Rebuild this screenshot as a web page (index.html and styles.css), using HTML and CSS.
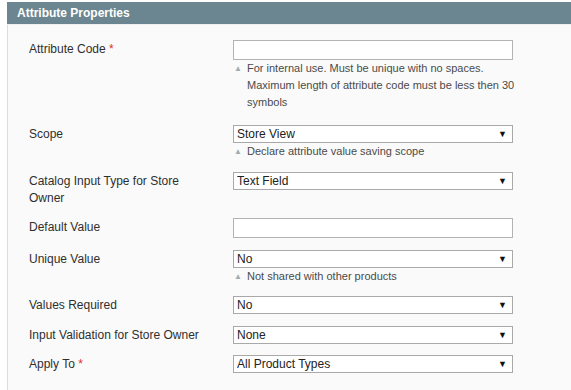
FILE: index.html
```html
<!DOCTYPE html>
<html lang="en">
<head>
    <meta charset="UTF-8">
    <title>Attribute Properties</title>
    <link rel="stylesheet" href="styles.css">
</head>
<body>

    <div class="section">
        <div class="section-head">Attribute Properties</div>

        <div class="section-body">
            <!-- Attribute code -->
            <div class="row">
                <label class="label" for="attribute_code">Attribute Code <span class="req">*</span></label>
                <div class="field">
                    <input type="text" id="attribute_code" class="input-text">
                    <p class="note">For internal use. Must be unique with no spaces. Maximum length of attribute code must be less then 30 symbols</p>
                </div>
            </div>

            <div class="row">
                <label class="label" for="scope">Scope</label>
                <div class="field">
                    <div class="select"><select id="scope"><option>Store View</option></select></div>
                    <p class="note">Declare attribute value saving scope</p>
                </div>
            </div>

            <div class="row">
                <label class="label" for="frontend_input">Catalog Input Type for Store Owner</label>
                <div class="field">
                    <div class="select"><select id="frontend_input"><option>Text Field</option></select></div>
                </div>
            </div>

            <div class="row">
                <label class="label" for="default_value">Default Value</label>
                <div class="field">
                    <input type="text" id="default_value" class="input-text">
                </div>
            </div>

            <div class="row">
                <label class="label" for="is_unique">Unique Value</label>
                <div class="field">
                    <div class="select"><select id="is_unique"><option>No</option></select></div>
                    <p class="note">Not shared with other products</p>
                </div>
            </div>

            <div class="row">
                <label class="label" for="is_required">Values Required</label>
                <div class="field">
                    <div class="select"><select id="is_required"><option>No</option></select></div>
                </div>
            </div>

            <div class="row">
                <label class="label" for="frontend_class">Input Validation for Store Owner</label>
                <div class="field">
                    <div class="select"><select id="frontend_class"><option>None</option></select></div>
                </div>
            </div>

            <div class="row">
                <label class="label" for="apply_to">Apply To <span class="req">*</span></label>
                <div class="field">
                    <div class="select"><select id="apply_to"><option>All Product Types</option></select></div>
                </div>
            </div>
        </div>
    </div>

</body>
</html>
```

FILE: styles.css
```css
body {
    margin: 0;
    background-color: #fff;
    font-family: 'Liberation Sans', Arial, sans-serif;
    font-size: 12px;
    color: #2f2f2f;
}
.section {
    margin: 2px 0 0 7px;
}
.section-head {
    height: 22px;
    line-height: 22px;
    padding: 0 10px;
    background-color: #6b8690;
    color: #fff;
    font-weight: bold;
    font-size: 12px;
    border-bottom: 1px solid #eef1f2;
}
.section-body {
    background-color: #fafafa;
    border-left: 1px solid #dcdcdc;
    padding: 15px 0 20px 21px;
    min-height: 340px;
}
.row {
    display: grid;
    grid-template-columns: 204px 280px;
    margin-bottom: 11.5px;
}
.row:first-child {
    margin-bottom: 14px;
}
.label {
    width: 180px;
    line-height: 17px;
    padding-top: 1px;
}
.req {
    color: #e03030;
}
.field {
    display: flex;
    flex-direction: column;
}
.input-text {
    box-sizing: border-box;
    width: 280px;
    height: 20px;
    margin: 0;
    padding: 0 4px;
    border: 1px solid #b3b3b3;
    background-color: #fff;
    font: inherit;
}
.select {
    position: relative;
    width: 280px;
}
.select select {
    box-sizing: border-box;
    width: 100%;
    height: 18px;
    margin: 0;
    padding: 0 20px 0 3px;
    border: 1px solid #a9a9a9;
    border-radius: 0;
    background-color: #fff;
    color: #222;
    font: inherit;
    font-size: 12px;
    line-height: 16px;
    -webkit-appearance: none;
    appearance: none;
}
.select::after {
    content: "\25BC";
    position: absolute;
    right: 6px;
    top: 3px;
    font-size: 9px;
    line-height: 12px;
    color: #111;
    pointer-events: none;
}
.note {
    margin: 0 -20px 0 0;
    padding-left: 14px;
    position: relative;
    font-size: 11px;
    line-height: 17px;
    color: #4a4a4a;
}
.note::before {
    content: "\25B2";
    position: absolute;
    left: 1px;
    top: 0;
    font-size: 8px;
    color: #a2abae;
}
```
